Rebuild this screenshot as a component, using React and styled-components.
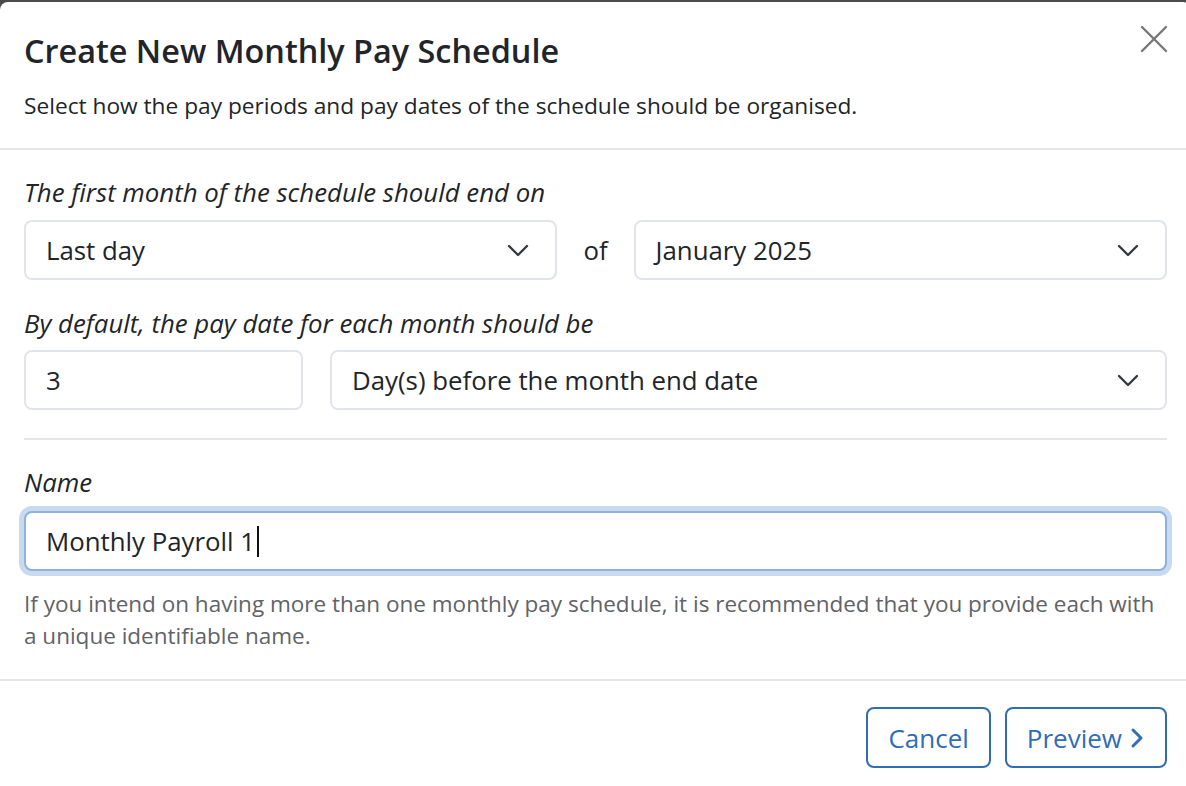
import React from "react";
import styled, { createGlobalStyle } from "styled-components";

const GlobalStyle = createGlobalStyle`
  html, body {
    margin: 0;
    padding: 0;
    background: #4b4b4b;
    overflow: hidden;
  }
  body {
    font-family: "Open Sans", "Noto Sans", sans-serif;
    color: #212529;
  }
`;

const Page = styled.div`
  width: 1186px;
  height: 786px;
  padding-top: 2px;
  box-sizing: border-box;
  overflow: hidden;
`;

const Dialog = styled.div`
  width: 1191px;
  min-height: 800px;
  background: #fff;
  border-radius: 8px 8px 0 0;
`;

const Header = styled.div`
  position: relative;
  padding: 31px 24px 27px;
  border-bottom: 2px solid #e3e5e8;
`;

const Title = styled.h2`
  margin: 0;
  font-size: 32.4px;
  font-weight: 600;
  line-height: 34px;
  color: #212529;
`;

const Subtitle = styled.p`
  margin: 24px 0 0;
  font-size: 22.7px;
  line-height: 30px;
  color: #212529;
`;

const CloseButton = styled.button`
  position: absolute;
  top: 22px;
  right: 22px;
  width: 30px;
  height: 30px;
  padding: 0;
  border: 0;
  background: none;
  display: flex;
  align-items: center;
  justify-content: center;
`;

const Body = styled.div`
  padding: 26px 24px 27px;
  border-bottom: 2px solid #e3e5e8;
`;

const Label = styled.div`
  font-style: italic;
  font-size: 25.8px;
  line-height: 33px;
  margin-bottom: ${(p) => p.$gap || 11}px;
`;

const Row = styled.div`
  display: grid;
  grid-template-columns: ${(p) => p.$cols};
  column-gap: ${(p) => p.$gap}px;
  align-items: center;
  margin-bottom: ${(p) => p.$mb || 0}px;
`;

const Field = styled.div`
  height: 60px;
  box-sizing: border-box;
  border: 2px solid ${(p) => (p.$focus ? "#8cb3de" : "#e1e4e8")};
  border-radius: 8px;
  padding: 0 26px 0 20px;
  display: flex;
  align-items: center;
  justify-content: space-between;
  font-size: 25.8px;
  color: #212529;
  background: #fff;
  box-shadow: ${(p) => (p.$focus ? "0 0 0 5px #c9daee" : "none")};
`;

const Value = styled.span`
  display: flex;
  align-items: center;
  line-height: 30px;
`;

const Caret = styled.span`
  display: inline-block;
  width: 2px;
  height: 31px;
  margin-left: 2px;
  background: #111;
`;

const Of = styled.span`
  font-size: 25.8px;
  line-height: 30px;
`;

const Divider = styled.hr`
  margin: 28px 0 26px;
  border: 0;
  border-top: 2px solid #e3e5e8;
`;

const Help = styled.p`
  margin: 17px 0 0;
  font-size: 22.5px;
  line-height: 32px;
  color: #5f6368;
`;

const Footer = styled.div`
  display: flex;
  justify-content: flex-end;
  gap: 14px;
  padding: 26px 24px;
`;

const Button = styled.button`
  height: 61px;
  box-sizing: border-box;
  padding: 0 20px;
  border: 2px solid #2f6db5;
  border-radius: 8px;
  background: #fff;
  color: #2f6db5;
  font-family: "Open Sans", "Noto Sans", sans-serif;
  font-size: 26px;
  display: flex;
  align-items: center;
  gap: 7px;
`;

const Chevron = () => (
  <svg width="22" height="14" viewBox="0 0 22 14">
    <path d="M2 3l9 9 9-9" fill="none" stroke="#343a40" strokeWidth="2.4" strokeLinecap="round" strokeLinejoin="round" />
  </svg>
);

const Select = ({ children }) => (
  <Field>
    <Value>{children}</Value>
    <Chevron />
  </Field>
);

export default function App() {
  return (
    <Page>
      <GlobalStyle />
      <Dialog>
        <Header>
          <Title>Create New Monthly Pay Schedule</Title>
          <Subtitle>
            Select how the pay periods and pay dates of the schedule should be organised.
          </Subtitle>
          <CloseButton aria-label="Close">
            <svg width="28" height="28" viewBox="0 0 28 28">
              <path d="M2 2l24 24M26 2L2 26" stroke="#777" strokeWidth="2.4" strokeLinecap="round" />
            </svg>
          </CloseButton>
        </Header>
        <Body>
          <Label>The first month of the schedule should end on</Label>
          <Row $cols="1fr auto 1fr" $gap={26} $mb={27}>
            <Select>Last day</Select>
            <Of>of</Of>
            <Select>January 2025</Select>
          </Row>
          <Label $gap={10}>By default, the pay date for each month should be</Label>
          <Row $cols="1fr 3fr" $gap={27}>
            <Field>
              <Value>3</Value>
            </Field>
            <Select>Day(s) before the month end date</Select>
          </Row>
          <Divider />
          <Label $gap={12}>Name</Label>
          <Field $focus>
            <Value>
              Monthly Payroll 1<Caret />
            </Value>
          </Field>
          <Help>
            If you intend on having more than one monthly pay schedule, it is recommended that you provide each with
            a unique identifiable name.
          </Help>
        </Body>
        <Footer>
          <Button>Cancel</Button>
          <Button>
            Preview
            <svg width="16" height="24" viewBox="0 0 16 24">
              <path d="M4 4l8 8-8 8" fill="none" stroke="#2f6db5" strokeWidth="3" strokeLinecap="round" strokeLinejoin="round" />
            </svg>
          </Button>
        </Footer>
      </Dialog>
    </Page>
  );
}
